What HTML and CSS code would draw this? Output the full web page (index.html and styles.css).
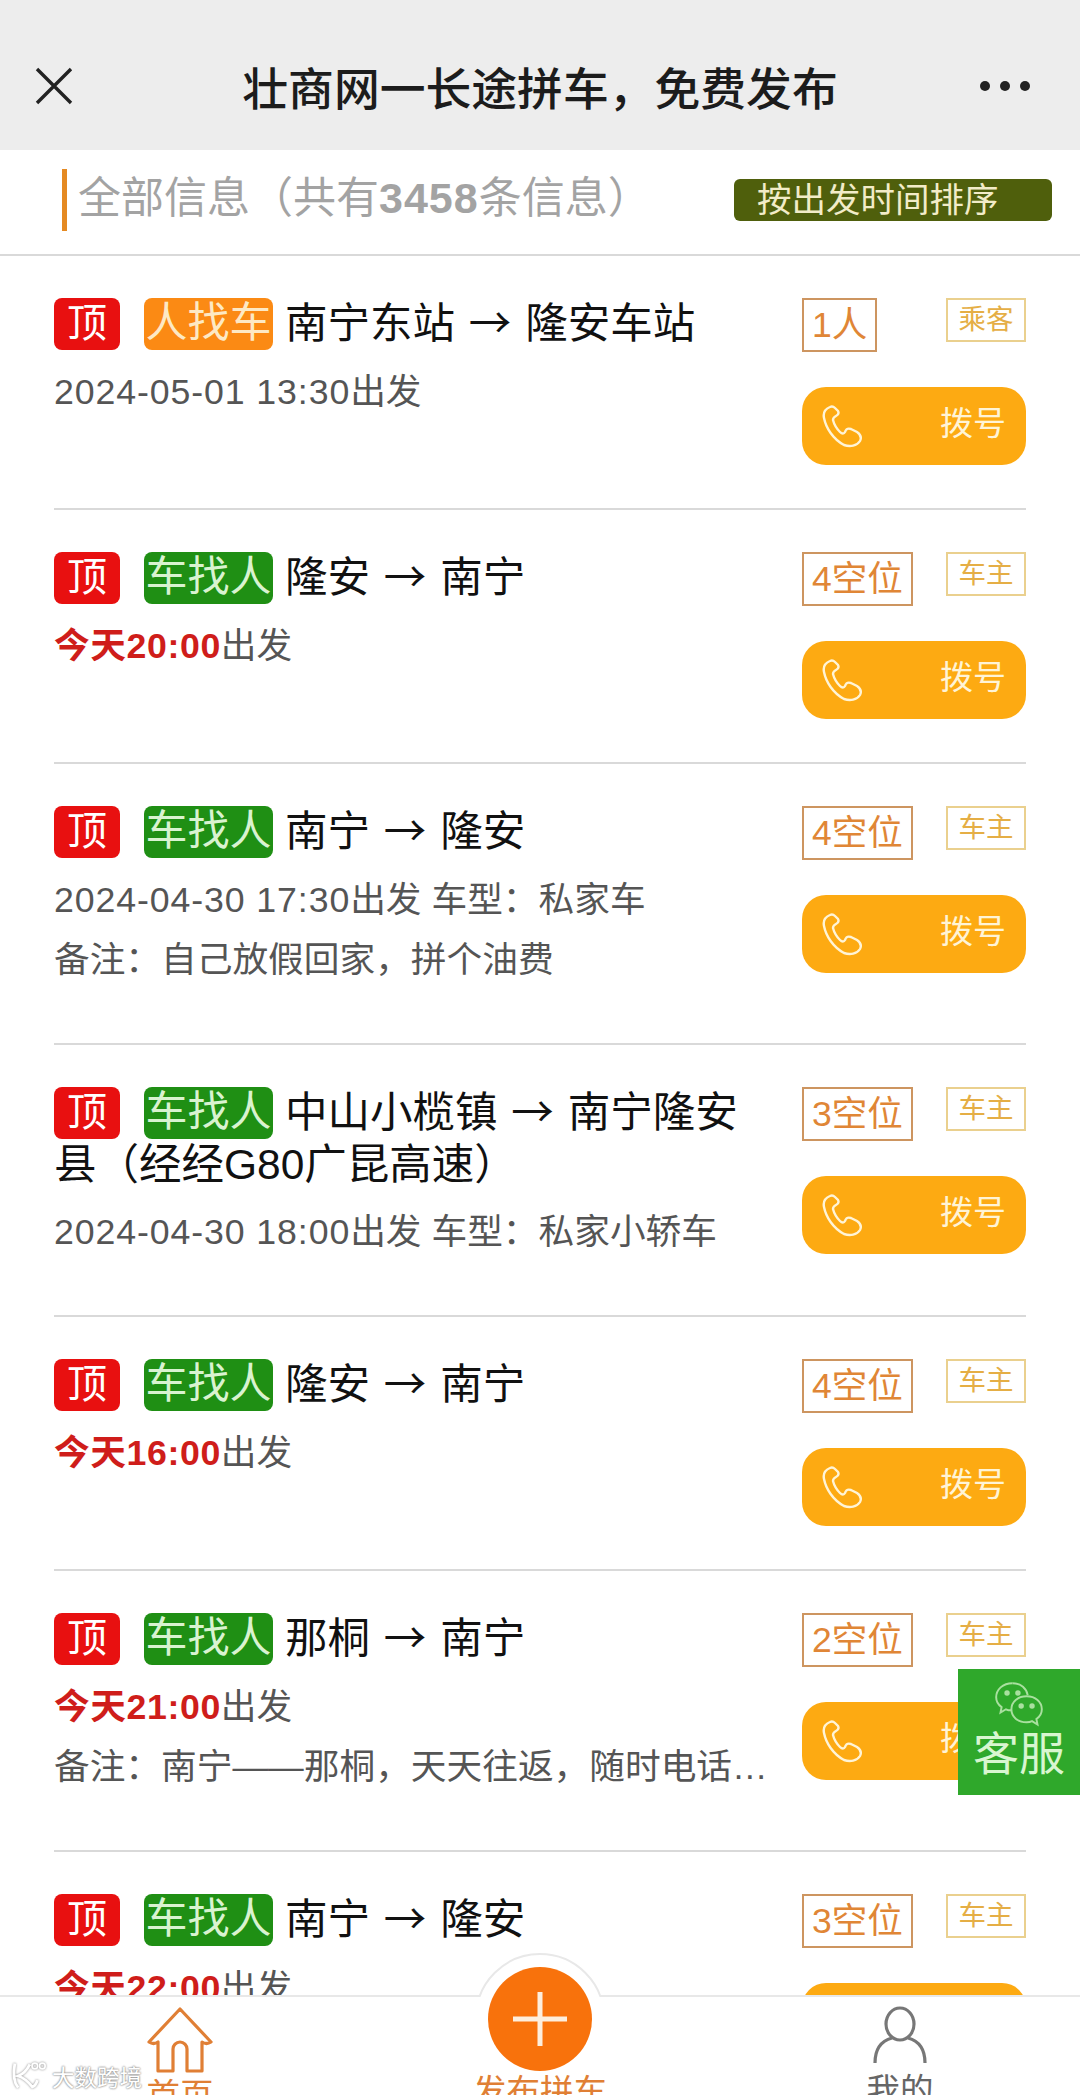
FILE: index.html
```html
<!DOCTYPE html>
<html lang="zh-CN">
<head>
    <meta charset="UTF-8">
    <meta name="viewport" content="width=device-width, initial-scale=1.0">
    <title>壮商网一长途拼车，免费发布</title>
    <link rel="stylesheet" href="styles.css">
</head>
<body>

    <svg class="defs" width="0" height="0">
        <symbol id="phone" viewBox="0 0 44 44">
            <path d="M10 3C5 5 3 9 4 14c2 10 9 21 20 27 6 2 13 1 16-4 2-4 0-7-3-9l-6-3c-3-1-5 0-6 3-1 2-3 2-5 0-4-4-6-8-7-12 0-2 1-3 3-4 2-1 3-3 2-5l-3-3c-2-2-3-2-5-1z" fill="none" stroke="currentColor" stroke-width="2.4"/>
        </symbol>
    </svg>

    <div class="page">
        <div class="navbar">
            <svg class="nav-close" width="38" height="38" viewBox="0 0 38 38">
                <path d="M2 2L36 36M36 2L2 36" stroke="#222" stroke-width="3.4" fill="none"/>
            </svg>
            <div class="nav-title">壮商网一长途拼车，免费发布</div>
            <div class="nav-more"><span></span><span></span><span></span></div>
        </div>

        <div class="list-head">
            <div class="list-count">全部信息（共有<b>3458</b>条信息）</div>
            <div class="sort-btn">按出发时间排序</div>
        </div>

        <div class="list">
            <div class="item">
                <div class="item-main">
                    <div class="route"><span class="tag top">顶</span><span class="tag seek-car">人找车</span>南宁东站 <span class="arrow">→</span> 隆安车站</div>
                    <div class="line"><span class="time">2024-05-01 13:30</span>出发</div>
                </div>
                <div class="item-side">
                    <div class="badges"><span class="seats">1人</span><span class="role">乘客</span></div>
                    <div class="call"><svg class="call-icon"><use href="#phone"/></svg><span class="call-text">拨号</span></div>
                </div>
            </div>

            <div class="item">
                <div class="item-main">
                    <div class="route"><span class="tag top">顶</span><span class="tag seek-man">车找人</span>隆安 <span class="arrow">→</span> 南宁</div>
                    <div class="line"><b class="today">今天20:00</b>出发</div>
                </div>
                <div class="item-side">
                    <div class="badges"><span class="seats">4空位</span><span class="role">车主</span></div>
                    <div class="call"><svg class="call-icon"><use href="#phone"/></svg><span class="call-text">拨号</span></div>
                </div>
            </div>

            <div class="item">
                <div class="item-main">
                    <div class="route"><span class="tag top">顶</span><span class="tag seek-man">车找人</span>南宁 <span class="arrow">→</span> 隆安</div>
                    <div class="line"><span class="time">2024-04-30 17:30</span>出发 车型：私家车</div>
                    <div class="line">备注：自己放假回家，拼个油费</div>
                </div>
                <div class="item-side">
                    <div class="badges"><span class="seats">4空位</span><span class="role">车主</span></div>
                    <div class="call"><svg class="call-icon"><use href="#phone"/></svg><span class="call-text">拨号</span></div>
                </div>
            </div>

            <div class="item">
                <div class="item-main">
                    <div class="route"><span class="tag top">顶</span><span class="tag seek-man">车找人</span>中山小榄镇 <span class="arrow">→</span> 南宁隆安县（经经G80广昆高速）</div>
                    <div class="line"><span class="time">2024-04-30 18:00</span>出发 车型：私家小轿车</div>
                </div>
                <div class="item-side">
                    <div class="badges"><span class="seats">3空位</span><span class="role">车主</span></div>
                    <div class="call"><svg class="call-icon"><use href="#phone"/></svg><span class="call-text">拨号</span></div>
                </div>
            </div>

            <div class="item">
                <div class="item-main">
                    <div class="route"><span class="tag top">顶</span><span class="tag seek-man">车找人</span>隆安 <span class="arrow">→</span> 南宁</div>
                    <div class="line"><b class="today">今天16:00</b>出发</div>
                </div>
                <div class="item-side">
                    <div class="badges"><span class="seats">4空位</span><span class="role">车主</span></div>
                    <div class="call"><svg class="call-icon"><use href="#phone"/></svg><span class="call-text">拨号</span></div>
                </div>
            </div>

            <div class="item">
                <div class="item-main">
                    <div class="route"><span class="tag top">顶</span><span class="tag seek-man">车找人</span>那桐 <span class="arrow">→</span> 南宁</div>
                    <div class="line"><b class="today">今天21:00</b>出发</div>
                    <div class="line clip">备注：南宁——那桐，天天往返，随时电话联系我们</div>
                </div>
                <div class="item-side">
                    <div class="badges"><span class="seats">2空位</span><span class="role">车主</span></div>
                    <div class="call"><svg class="call-icon"><use href="#phone"/></svg><span class="call-text">拨号</span></div>
                </div>
            </div>

            <div class="item">
                <div class="item-main">
                    <div class="route"><span class="tag top">顶</span><span class="tag seek-man">车找人</span>南宁 <span class="arrow">→</span> 隆安</div>
                    <div class="line"><b class="today">今天22:00</b>出发</div>
                </div>
                <div class="item-side">
                    <div class="badges"><span class="seats">3空位</span><span class="role">车主</span></div>
                    <div class="call"><svg class="call-icon"><use href="#phone"/></svg><span class="call-text">拨号</span></div>
                </div>
            </div>
        </div>

        <div class="service">
            <svg class="service-icon" width="50" height="50" viewBox="0 0 46 46" fill="none" stroke="currentColor" stroke-width="1.8">
                <path d="M17 2C8 2 2 8 2 15c0 4 2 7 5 9l-1 5 5-3c2 1 3 1 5 1"/>
                <path d="M17 2c8 0 13 5 14 11"/>
                <path d="M30 14c8 0 14 5 14 12 0 4-2 7-5 9l1 5-5-3c-2 1-3 1-5 1-8 0-14-5-14-12s6-12 14-12z"/>
                <circle cx="12" cy="11" r="1.6" fill="currentColor"/>
                <circle cx="22" cy="11" r="1.6" fill="currentColor"/>
                <circle cx="25" cy="23" r="1.6" fill="currentColor"/>
                <circle cx="35" cy="23" r="1.6" fill="currentColor"/>
            </svg>
            <div class="service-text">客服</div>
        </div>

        <div class="tabbar">
            <div class="tab tab-home active">
                <svg width="66" height="66" viewBox="0 0 66 66" fill="none" stroke="#e07f35" stroke-width="3.2" stroke-linejoin="round">
                    <path d="M33 2L2 35c3 2 6 2 9 0v29h15V42a7 7 0 0 1 14 0v22h15V35c3 2 6 2 9 0z"/>
                </svg>
                <span>首页</span>
            </div>
            <div class="tab active tab-add">
                <div class="add-bump"></div>
                <div class="add-btn">
                    <svg width="60" height="60" viewBox="0 0 60 60">
                        <path d="M30 3V57M3 30H57" stroke="#fdeedd" stroke-width="5"/>
                    </svg>
                </div>
                <span>发布拼车</span>
            </div>
            <div class="tab tab-mine">
                <svg width="54" height="58" viewBox="0 0 54 58" fill="none" stroke="#777" stroke-width="3.2">
                    <ellipse cx="27" cy="18" rx="14" ry="16"/>
                    <path d="M2 57C2 43 8 35 19 32M52 57C52 43 46 35 35 32"/>
                </svg>
                <span>我的</span>
            </div>
        </div>

        <div class="watermark">
            <svg width="38" height="30" viewBox="0 0 42 36" fill="none" stroke="#fff" stroke-width="3.4">
                <path d="M4 3C2 14 3 26 8 32M22 4C18 12 13 16 8 18c7 2 12 7 17 13 3-1 5-4 6-8"/>
                <circle cx="28" cy="6" r="3.4" stroke-width="2"/>
                <circle cx="37" cy="6" r="3.4" stroke-width="2"/>
            </svg>
            <span>大数跨境</span>
        </div>
    </div>

</body>
</html>
```

FILE: styles.css
```css
html, body {
    margin: 0;
    padding: 0;
    background-color: #fff;
}

body {
    font-family: "Liberation Sans", "Noto Sans CJK SC", sans-serif;
    color: #111;
}

.defs {
    display: block;
    height: 0;
}

.page {
    position: relative;
    width: 1080px;
    height: 2095px;
    overflow: hidden;
    background-color: #fff;
}

/* top bar */
.navbar {
    height: 150px;
    display: grid;
    grid-template-columns: 1fr auto 1fr;
    align-items: center;
    padding: 21px 50px 0;
    box-sizing: border-box;
    background-color: #ededed;
}

.nav-close {
    display: block;
    margin-left: -15px;
}

.nav-title {
    font-family: "Noto Sans CJK SC", sans-serif;
    font-size: 45.8px;
    font-weight: 500;
    color: #1c1c1c;
}

.nav-more {
    display: flex;
    justify-content: flex-end;
    gap: 10px;
}

.nav-more span {
    width: 10px;
    height: 10px;
    border-radius: 50%;
    background-color: #222;
}

/* list header */
.list-head {
    height: 106px;
    display: flex;
    align-items: center;
    justify-content: space-between;
    padding: 0 28px 4px 62px;
    box-sizing: border-box;
    border-bottom: 2px solid #d9d9d9;
}

.list-count {
    height: 62px;
    line-height: 58px;
    padding-left: 11px;
    border-left: 5px solid #e58a22;
    font-size: 43px;
    color: #a3a3a3;
    white-space: nowrap;
}

.list-count b {
    letter-spacing: 1px;
}

.sort-btn {
    width: 318px;
    height: 42px;
    line-height: 42px;
    padding-left: 23px;
    box-sizing: border-box;
    border-radius: 6px;
    background-color: #4f5f0c;
    color: #f2ecc8;
    font-size: 34.5px;
}

/* rows */
.list {
    padding: 0 54px;
}

.item {
    display: flex;
    justify-content: space-between;
    gap: 24px;
    padding-top: 42px;
    border-bottom: 2px solid #d9d9d9;
}

.item-main {
    flex: 1;
    min-width: 0;
    padding-bottom: 53px;
}

.route {
    font-size: 42.5px;
    line-height: 51px;
    word-spacing: 2px;
    color: #111;
}

.arrow {
    font-family: "Noto Sans CJK SC", sans-serif;
    line-height: 1;
}

.tag {
    display: inline-block;
    height: 52px;
    line-height: 50px;
    font-size: 40px;
    border-radius: 8px;
    color: #fff;
    text-align: center;
    vertical-align: top;
}

.top {
    width: 66px;
    margin-right: 24px;
    background-color: #e81010;
}

.seek-car,
.seek-man {
    width: 129px;
    margin-right: 12px;
    font-size: 42px;
}

.seek-car {
    background-color: #fb8a14;
    color: #fde9c4;
}

.seek-man {
    background-color: #1f8f14;
    color: #d9f3d0;
}

.line {
    font-size: 35.7px;
    line-height: 60px;
    color: #555;
    white-space: nowrap;
}

.route + .line {
    margin-top: 12px;
}

.time {
    letter-spacing: 0.9px;
}

.clip {
    overflow: hidden;
    text-overflow: ellipsis;
}

.today {
    letter-spacing: 0.6px;
    color: #cf1d1a;
}

.item-side {
    flex: none;
    width: 224px;
    padding-bottom: 43px;
}

.badges {
    display: flex;
    justify-content: space-between;
    align-items: flex-start;
    height: 54px;
    margin-bottom: 35px;
}

.seats {
    height: 54px;
    line-height: 50px;
    padding: 0 8px;
    box-sizing: border-box;
    border: 2px solid #cd9560;
    color: #e08636;
    font-size: 35.5px;
}

.role {
    width: 80px;
    height: 44px;
    line-height: 40px;
    box-sizing: border-box;
    border: 2px solid #ead08e;
    color: #e5ae45;
    font-size: 27.5px;
    text-align: center;
}

.call {
    height: 78px;
    display: flex;
    align-items: center;
    justify-content: space-between;
    padding: 0 20px 0 18px;
    border-radius: 24px;
    background-color: #fdaa12;
    color: #fff4d6;
    font-size: 33px;
}

.call-icon {
    width: 44px;
    height: 44px;
}

.call-text {
    margin-bottom: 10px;
}

/* floating service button */
.service {
    position: absolute;
    right: 0;
    top: 1669px;
    width: 122px;
    height: 126px;
    display: flex;
    flex-direction: column;
    align-items: center;
    background-color: #2fa82b;
    color: #d8f6d0;
}

.service-icon {
    margin-top: 12px;
    color: #a9e09f;
}

.service-text {
    margin-top: -6px;
    font-size: 46px;
    line-height: 58px;
}

/* bottom tabs */
.tabbar {
    position: absolute;
    left: 0;
    right: 0;
    top: 1995px;
    height: 100px;
    display: flex;
    border-top: 2px solid #e8e8e8;
    box-sizing: border-box;
    background-color: #fff;
}

.tab {
    position: relative;
    flex: 1;
    display: flex;
    flex-direction: column;
    align-items: center;
    font-size: 33.5px;
    line-height: 40px;
    color: #666;
}

.tab svg {
    display: block;
    flex: none;
}

.tab span {
    position: relative;
}

.tab.active {
    color: #e07f35;
}

.tab-home {
    padding-top: 10px;
}

.tab-home svg {
    margin-bottom: 3px;
}

.tab-mine {
    padding-top: 9px;
}

.tab-mine svg {
    margin-bottom: 7px;
}

.tab-add {
    padding-top: 75px;
}

/* only the cap of the circle shows, above the bar's top line */
.add-bump {
    position: absolute;
    left: 50%;
    top: -44px;
    width: 130px;
    height: 130px;
    margin-left: -65px;
    box-sizing: border-box;
    border: 2px solid #e8e8e8;
    border-radius: 50%;
    background-color: #fff;
    clip-path: inset(0 0 86px 0);
}

.add-btn {
    position: absolute;
    left: 50%;
    top: -30px;
    width: 104px;
    height: 104px;
    margin-left: -52px;
    display: flex;
    align-items: center;
    justify-content: center;
    border-radius: 50%;
    background-color: #f8720c;
}

/* image watermark */
.watermark {
    position: absolute;
    left: 10px;
    top: 2060px;
    display: flex;
    align-items: center;
    gap: 4px;
    color: #fff;
    font-size: 22.5px;
    text-shadow: 0 0 2px #888, 0 0 2px #888;
}

.watermark svg {
    filter: drop-shadow(0 0 1px #888);
}
```
